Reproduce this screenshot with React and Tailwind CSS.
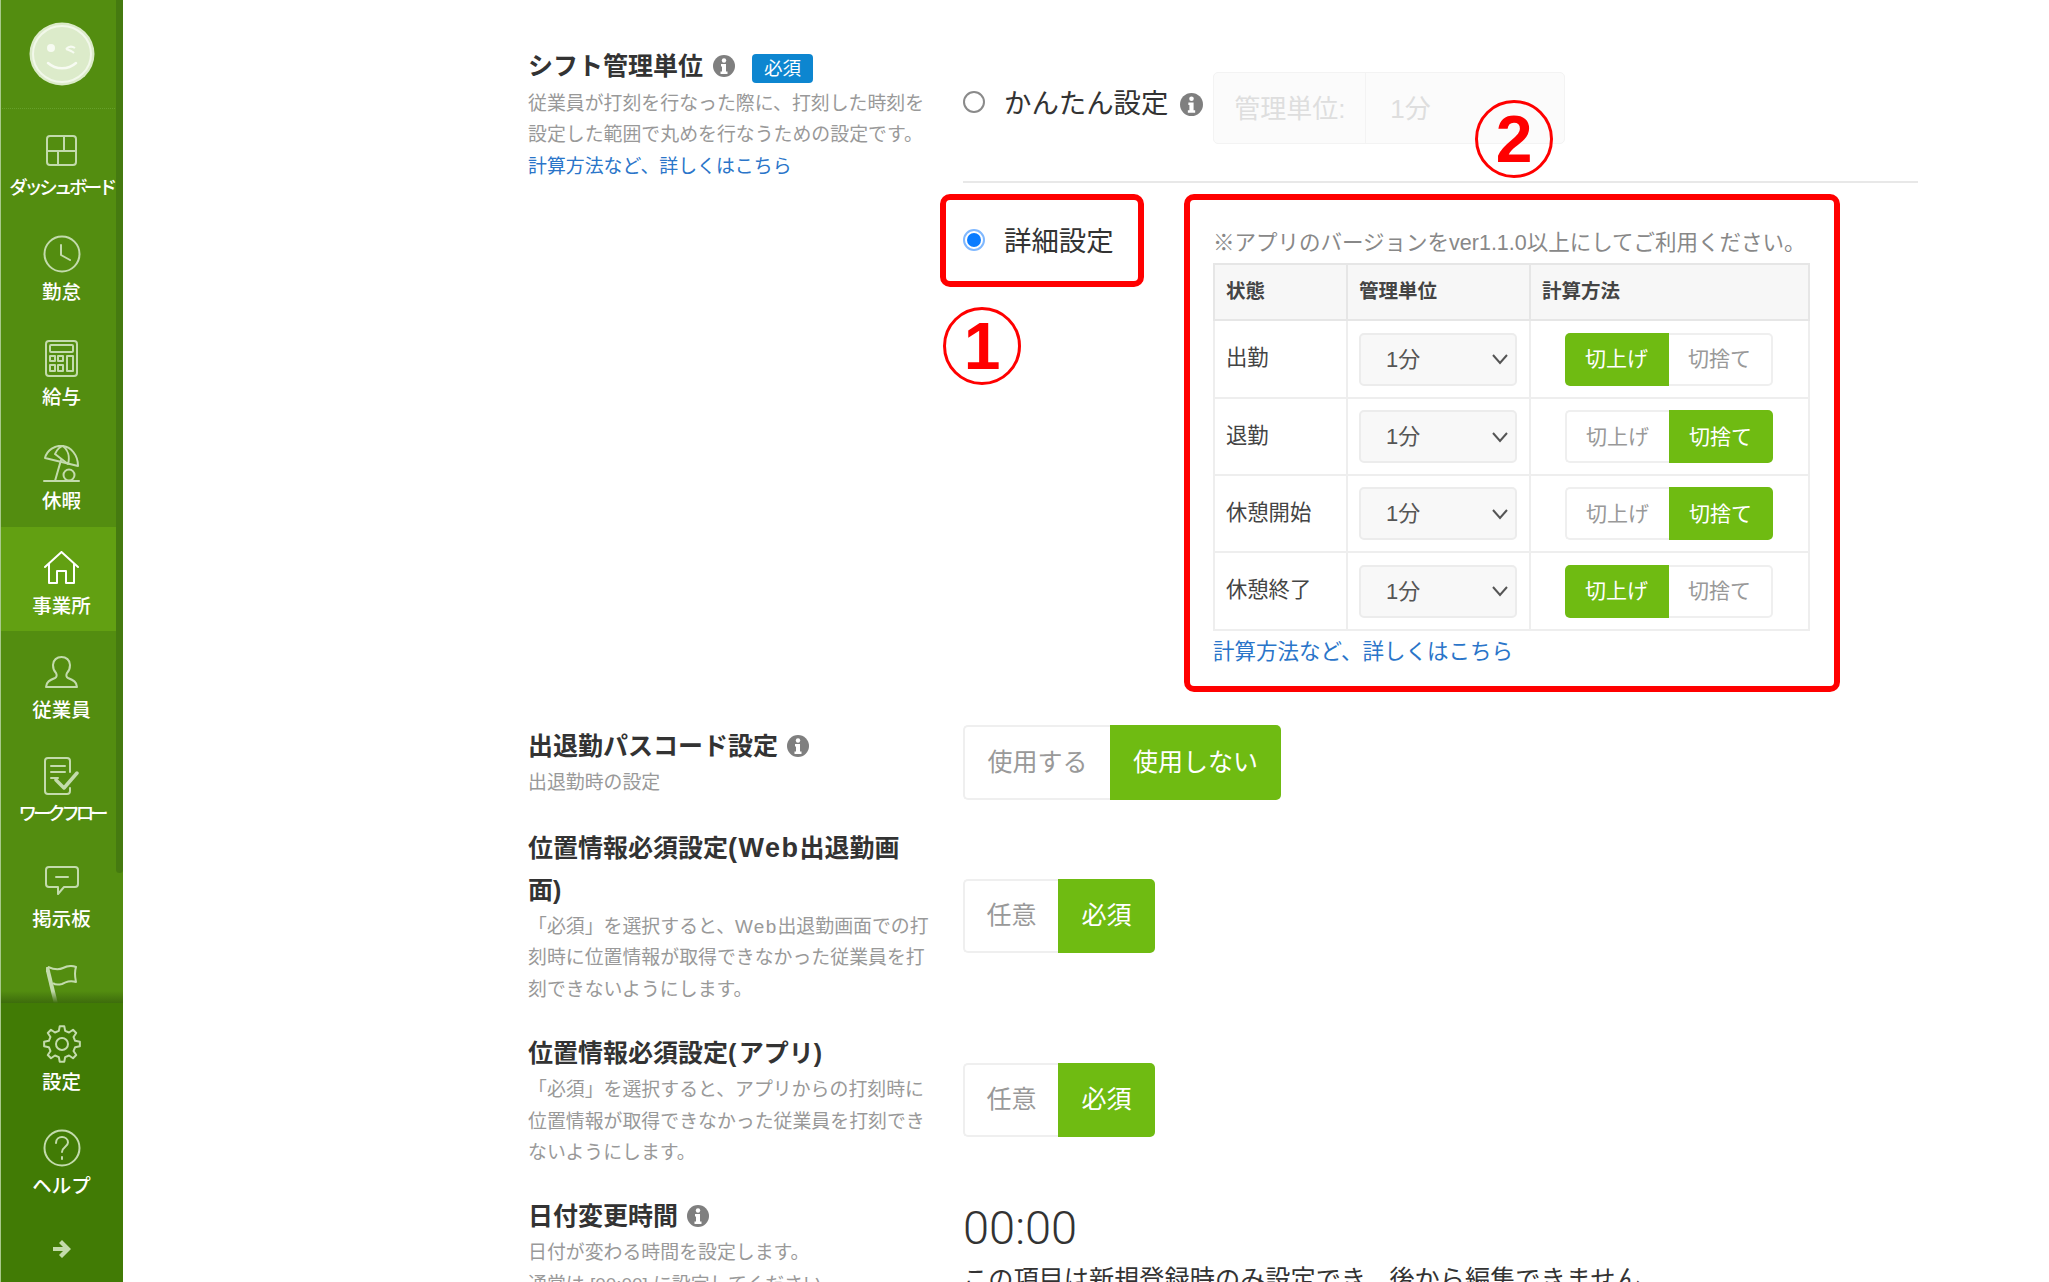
import React from "react";

const ic = { fill: "none", stroke: "#c3dbac", strokeWidth: 2, strokeLinecap: "round", strokeLinejoin: "round" };

function gearPath() {
  const n = 8, cx = 19, cy = 19, R = 18, r = 13.5;
  const pts = [];
  for (let i = 0; i < n; i++) {
    const a = (i * 2 * Math.PI) / n - Math.PI / 2;
    const step = (2 * Math.PI) / n;
    const at = (ang, rad) => `${(cx + rad * Math.cos(ang)).toFixed(2)} ${(cy + rad * Math.sin(ang)).toFixed(2)}`;
    pts.push(at(a - step * 0.3, r), at(a - step * 0.16, R), at(a + step * 0.16, R), at(a + step * 0.3, r));
  }
  return "M" + pts.join("L") + "Z";
}

const Icons = {
  dash: (
    <svg width="31" height="31" viewBox="0 0 31 31" {...ic}>
      <rect x="1" y="1" width="29" height="29" rx="3" />
      <path d="M1 16h29M18 1v15M12 16v14" />
    </svg>
  ),
  clock: (
    <svg width="38" height="38" viewBox="0 0 38 38" {...ic}>
      <circle cx="19" cy="19" r="17.5" />
      <path d="M18 10v10l9 5" />
    </svg>
  ),
  calc: (
    <svg width="33" height="37" viewBox="0 0 33 37" {...ic}>
      <rect x="1" y="1" width="31" height="35" rx="3" />
      <rect x="5" y="5" width="23" height="7" rx="1" />
      <path d="M5 16h5v5H5zM13 16h5v5h-5zM5 25h5v6H5zM13 25h5v6h-5zM22 16h6v15h-6z" />
    </svg>
  ),
  umbrella: (
    <svg width="37" height="37" viewBox="0 0 37 37" {...ic}>
      <path d="M1 36h35" />
      <path d="M2 13C4 5 12 0 20 1c8 1 15 9 15 20Z" />
      <path d="M12 9c2-5 6-8 8-8M25 19c2-7 0-14-5-18M12 9l13 10" />
      <path d="M18 15l-6 21" />
      <circle cx="26" cy="30" r="5.5" />
    </svg>
  ),
  home: (
    <svg width="35" height="33" viewBox="0 0 35 33" fill="none" stroke="#fff" strokeWidth="2" strokeLinejoin="round" strokeLinecap="round">
      <path d="M1 16 17.5 1 34 16" />
      <path d="M5 13v19h8V20h9v12h8V13" />
    </svg>
  ),
  user: (
    <svg width="33" height="32" viewBox="0 0 33 32" {...ic}>
      <path d="M1 31c0-5 4-7 9-9 2-1 2-3 1-5-2-2-3-5-3-8 0-5 4-8 8.500-8S25 4 25 9c0 3-1 6-3 8-1 2-1 4 1 5 5 2 9 4 9 9Z" />
    </svg>
  ),
  flow: (
    <svg width="35" height="38" viewBox="0 0 35 38" {...ic}>
      <path d="M26 15V4a3 3 0 0 0-3-3H4a3 3 0 0 0-3 3v30a3 3 0 0 0 3 3h19a3 3 0 0 0 3-3v-3" />
      <path d="M7 9h14M7 15h14M7 21h7" />
      <path d="M12 23l8 8L33 16" strokeWidth="3.500" />
    </svg>
  ),
  board: (
    <svg width="34" height="29" viewBox="0 0 34 29" {...ic}>
      <path d="M4 1h26a3 3 0 0 1 3 3v14a3 3 0 0 1-3 3H19l-6 7v-7H4a3 3 0 0 1-3-3V4a3 3 0 0 1 3-3Z" />
      <path d="M11 11h12" />
    </svg>
  ),
  flag: (
    <svg width="32" height="40" viewBox="0 0 32 40" fill="none" stroke="#c3dbac" strokeWidth="2" strokeLinejoin="round">
      <path d="M2 2c7 3 11 3 15 1 4-2 8-3 13-1-2 6-1 10 0 15-6-2-10 0-14 2-4 1-7 1-9-1" />
      <path d="M1 2l9 37" strokeWidth="4" />
    </svg>
  ),
  gear: (
    <svg width="38" height="38" viewBox="0 0 38 38" {...ic}>
      <path d={gearPath()} />
      <circle cx="19" cy="19" r="6" />
    </svg>
  ),
  help: (
    <svg width="38" height="38" viewBox="0 0 38 38" {...ic}>
      <circle cx="19" cy="19" r="17.5" />
      <path d="M13 14c0-4 3-6 6-6s6 2 6 5.500c0 4-6 4.500-6 9.500" />
      <path d="M19 28v2" />
    </svg>
  ),
};

function NavItem({ icon, label, active, labelClass = "text-[19.5px]" }) {
  return (
    <div className={`h-[104.4px] shrink-0 flex flex-col items-center pt-[21px] ${active ? "bg-[#62a012] mr-[7px] pl-[7px]" : ""}`}>
      <div className="h-[40px] flex items-center justify-center">{icon}</div>
      <div className={`mt-[6px] h-[24px] leading-[24px] font-medium text-white whitespace-nowrap ${labelClass}`}>{label}</div>
    </div>
  );
}

function Logo() {
  return (
    <svg width="66" height="64" viewBox="0 0 66 64">
      <ellipse cx="33" cy="32" rx="32.500" ry="31.500" fill="#dcebca" />
      <ellipse cx="33" cy="32" rx="29" ry="28" fill="none" stroke="#f2f8ea" strokeWidth="2" />
      <circle cx="22" cy="26" r="4" fill="#f7fbf2" />
      <path d="M37 27c3-3 6-3 9-1M37 27c3 1 6 2 8 4" fill="none" stroke="#f7fbf2" strokeWidth="2" />
      <path d="M19 41c8 7 20 7 28 0" fill="none" stroke="#f7fbf2" strokeWidth="2.500" strokeLinecap="round" />
    </svg>
  );
}

function Sidebar() {
  return (
    <aside className="relative w-[123px] shrink-0 h-[1282px] flex flex-col bg-[#538d10] border-l border-[#a8c98a] overflow-hidden">
      <div className="h-[109px] shrink-0 flex justify-center pt-[22px] border-b border-dotted border-[#66a02a] -ml-px">
        <Logo />
      </div>
      <div className="relative h-[894px] shrink-0 overflow-hidden -ml-px">
        <NavItem icon={Icons.dash} label="ダッシュボード" labelClass="text-[18.5px] tracking-[-3.6px]" />
        <NavItem icon={Icons.clock} label="勤怠" />
        <NavItem icon={Icons.calc} label="給与" />
        <NavItem icon={Icons.umbrella} label="休暇" />
        <NavItem icon={Icons.home} label="事業所" active />
        <NavItem icon={Icons.user} label="従業員" />
        <NavItem icon={Icons.flow} label="ワークフロー" labelClass="text-[18.5px] tracking-[-4.2px]" />
        <NavItem icon={Icons.board} label="掲示板" />
        <NavItem icon={Icons.flag} label="" />
        <div className="absolute left-0 right-0 bottom-0 h-[12px] bg-gradient-to-b from-transparent to-[#3d6c0c]" />
      </div>
      <div className="absolute right-0 top-0 w-[7px] h-[873px] bg-[#457a10] rounded-b" />
      <div className="flex-1 flex flex-col bg-[#417b05] -ml-px">
        <NavItem icon={Icons.gear} label="設定" />
        <NavItem icon={Icons.help} label="ヘルプ" />
        <div className="flex justify-center pt-[27px]">
          <svg width="20" height="20" viewBox="0 0 20 20" fill="#c3dbac">
            <path d="M10 1l9 9-9 9-3-3 4-4H1V8h10L7 4Z" />
          </svg>
        </div>
      </div>
    </aside>
  );
}

function Info({ size = 22 }) {
  return (
    <svg width={size} height={size} viewBox="0 0 22 22" className="shrink-0">
      <circle cx="11" cy="11" r="11" fill="#7f7f7f" />
      <circle cx="11" cy="5.500" r="2.200" fill="#fff" />
      <path d="M8 9h5v7.500h1.500V19h-7v-2.500H9V11.500H8Z" fill="#fff" />
    </svg>
  );
}

function Toggle({ options, active, widths, height, size }) {
  return (
    <div className="inline-flex" style={{ height }}>
      {options.map((o, i) => {
        const on = i === active;
        const first = i === 0;
        return (
          <div
            key={o}
            style={{ width: widths[i], fontSize: size }}
            className={`flex items-center justify-center whitespace-nowrap ${first ? "rounded-l-[5px]" : "rounded-r-[5px]"} ${
              on
                ? "bg-[#6fbb12] text-white"
                : `bg-white text-[#999] border-y-2 border-[#efefef] ${first ? "border-l-2" : "border-r-2"}`
            }`}
          >
            {o}
          </div>
        );
      })}
    </div>
  );
}

function Title({ children, info, badge, leading = "leading-[42px]", infoGap = "ml-[9px]" }) {
  return (
    <div className={`text-[25px] ${leading} font-bold text-[#333]`}>
      {children}
      {info && (
        <span className={`inline-block align-[-2px] ${infoGap}`}>
          <Info />
        </span>
      )}
      {badge && (
        <span className="inline-block align-[0px] ml-[17px] w-[61px] h-[29px] rounded-[4px] bg-[#0d86d0] text-white text-[18.5px] leading-[29px] text-center font-normal">
          必須
        </span>
      )}
    </div>
  );
}

function Desc({ children, className = "" }) {
  return <div className={`text-[18.9px] leading-[31.4px] text-[#999] whitespace-nowrap ${className}`}>{children}</div>;
}

function Radio({ checked }) {
  if (checked)
    return (
      <span className="w-[22px] h-[22px] shrink-0 rounded-full border-2 border-[#7fb8ff] bg-white flex items-center justify-center mb-[2px]">
        <span className="w-[14px] h-[14px] rounded-full bg-[#0a7cff]" />
      </span>
    );
  return <span className="w-[22px] h-[22px] shrink-0 rounded-full border-2 border-[#8a8a8a] bg-white mb-[12px]" />;
}

function Circled({ n, className = "" }) {
  return (
    <div className={`w-[78px] h-[78px] rounded-full border-[3px] border-[#f00] flex items-center justify-center text-[#f00] text-[66px] font-bold leading-none ${className}`}>
      {n}
    </div>
  );
}

const rows = [
  ["出勤", 0, "h-[78px]"],
  ["退勤", 1, "h-[77px]"],
  ["休憩開始", 1, "h-[77px]"],
  ["休憩終了", 0, "h-[78px]"],
];

function DetailTable() {
  return (
    <table className="table-fixed border-collapse w-[595px] text-[21.3px] text-[#444]">
      <colgroup>
        <col className="w-[133px]" />
        <col className="w-[183px]" />
        <col className="w-[279px]" />
      </colgroup>
      <thead>
        <tr className="h-[56px] bg-[#f7f7f7]">
          {["状態", "管理単位", "計算方法"].map((h) => (
            <th key={h} className="border-2 border-[#e6e6e6] text-left pl-[11px] text-[19.5px] font-bold text-[#444]">
              {h}
            </th>
          ))}
        </tr>
      </thead>
      <tbody>
        {rows.map(([name, a, h]) => (
          <tr key={name} className={h}>
            <td className="border-2 border-[#eeeeee] pl-[11px]">{name}</td>
            <td className="border-2 border-[#eeeeee] pl-[11px]">
              <div className="w-[158px] h-[53px] rounded-[5px] bg-[#f8f8f8] border-2 border-[#ececec] flex items-center justify-between pl-[25px] pr-[6px] text-[22px] text-[#555]">
                <span>1分</span>
                <svg width="18" height="12" viewBox="0 0 18 12" fill="none" stroke="#555" strokeWidth="2">
                  <path d="M2 2l7 8 7-8" />
                </svg>
              </div>
            </td>
            <td className="border-2 border-[#eeeeee]">
              <div className="flex justify-center pr-[2px]">
                <Toggle options={["切上げ", "切捨て"]} active={a} widths={[104, 104]} height={53} size={21} />
              </div>
            </td>
          </tr>
        ))}
      </tbody>
    </table>
  );
}

function Row({ left, children, className = "" }) {
  return (
    <div className={`flex ${className}`}>
      <div className="w-[435px] shrink-0 pr-[30px]">{left}</div>
      <div className="flex-1 min-w-0">{children}</div>
    </div>
  );
}

export default function App() {
  return (
    <div className="flex w-[2049px] h-[1282px] overflow-hidden bg-white text-[#333] font-['Liberation_Sans','Noto_Sans_CJK_JP',sans-serif]">
      <Sidebar />
      <main className="flex-1 min-w-0 pl-[405px] pr-[8px] pt-[45px]">
        <Row
          className="mb-[33px]"
          left={
            <>
              <Title info badge infoGap="ml-[10px]">シフト管理単位</Title>
              <Desc className="mt-px">
                従業員が打刻を行なった際に、打刻した時刻を
                <br />
                設定した範囲で丸めを行なうための設定です。
                <br />
                <span className="text-[#2a75c9]">計算方法など、詳しくはこちら</span>
              </Desc>
            </>
          }
        >
          <div className="relative w-[955px]">
            <div className="pt-[27px] flex items-center h-[98px]">
              <Radio />
              <span className="ml-[19px] text-[27.400px] text-[#333] whitespace-nowrap mb-[7px]">かんたん設定</span>
              <span className="ml-[12px] mb-[7px]">
                <Info size={23} />
              </span>
              <div className="ml-[10px] w-[352px] h-[72px] flex rounded-[5px] border border-[#f3f3f3] bg-[#fbfbfb] text-[#dedede] text-[26px]">
                <div className="w-[152px] flex items-center justify-center border-r border-[#f3f3f3] pt-[3px]">管理単位:</div>
                <div className="flex items-center pl-[24px] pt-[3px]">1分</div>
              </div>
            </div>
            <Circled n="2" className="absolute left-[512px] top-[55px]" />
            <div className="mt-[38px] h-[2px] bg-[#e8e8e8]" />
            <div className="mt-[11px] flex -ml-[23px]">
              <div className="w-[204px] shrink-0">
                <div className="h-[93px] rounded-[10px] border-[6px] border-[#f00] flex items-center pl-[17px]">
                  <Radio checked />
                  <span className="ml-[19px] text-[27.400px] text-[#333] mt-[2px]">詳細設定</span>
                </div>
                <Circled n="1" className="mt-[20px] ml-[3px]" />
              </div>
              <div className="ml-[40px] w-[656px] h-[498px] rounded-[10px] border-[6px] border-[#f00] pl-[23px] pt-[28px]">
                <div className="h-[30px] leading-[30px] mb-[5px] text-[21.5px] text-[#888] whitespace-nowrap">
                  ※アプリのバージョンをver1.1.0以上にしてご利用ください。
                </div>
                <DetailTable />
                <div className="mt-[6px] h-[30px] leading-[30px] text-[21.5px] text-[#2a75c9]">計算方法など、詳しくはこちら</div>
              </div>
            </div>
          </div>
        </Row>

        <Row
          className="mb-[28px]"
          left={
            <>
              <Title info>出退勤パスコード設定</Title>
              <Desc>出退勤時の設定</Desc>
            </>
          }
        >
          <Toggle options={["使用する", "使用しない"]} active={1} widths={[147, 171]} height={75} size={25} />
        </Row>

        <Row
          className="mb-[27px]"
          left={
            <>
              <Title leading="leading-[41.500px]">
                位置情報必須設定<span className="text-[27px] tracking-[1.5px]">(Web</span>出退勤画
                <br />
                面)
              </Title>
              <Desc>
                「必須」を選択すると、<span className="tracking-[1.3px]">Web</span>出退勤画面での打
                <br />
                刻時に位置情報が取得できなかった従業員を打
                <br />
                刻できないようにします。
              </Desc>
            </>
          }
        >
          <div className="pt-[51px]">
            <Toggle options={["任意", "必須"]} active={1} widths={[95, 97]} height={74} size={25} />
          </div>
        </Row>

        <Row
          className="mb-[27px]"
          left={
            <>
              <Title>
                位置情報必須設定<span className="tracking-[2.500px]">(</span>アプリ<span className="tracking-[2.500px]">)</span>
              </Title>
              <Desc>
                「必須」を選択すると、アプリからの打刻時に
                <br />
                位置情報が取得できなかった従業員を打刻でき
                <br />
                ないようにします。
              </Desc>
            </>
          }
        >
          <div className="pt-[31px]">
            <Toggle options={["任意", "必須"]} active={1} widths={[95, 97]} height={74} size={25} />
          </div>
        </Row>

        <Row
          left={
            <>
              <Title info>日付変更時間</Title>
              <Desc>
                日付が変わる時間を設定します。
                <br />
                通常は [00:00] に設定してください。
              </Desc>
            </>
          }
        >
          <div className="pt-[8px] text-[47px] leading-[50px] font-light font-['Roboto','Liberation_Sans',sans-serif] text-[#333]">00:00</div>
          <div className="mt-[8px] text-[25.200px] leading-[36px] text-[#333] whitespace-nowrap">この項目は新規登録時のみ設定でき、後から編集できません。</div>
        </Row>
      </main>
    </div>
  );
}
